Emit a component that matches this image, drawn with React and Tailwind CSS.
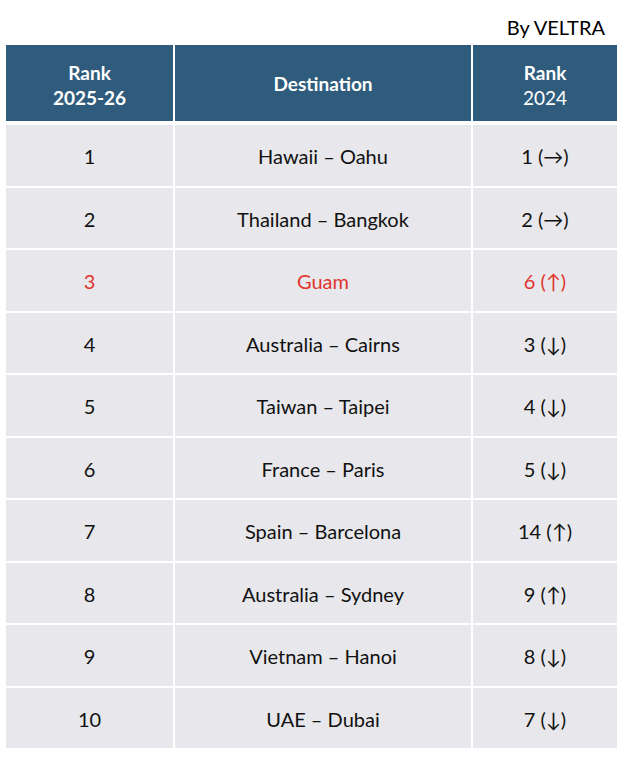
const rows = [
  { rank: '1', dest: 'Hawaii – Oahu', prev: '1', dir: '→' },
  { rank: '2', dest: 'Thailand – Bangkok', prev: '2', dir: '→' },
  { rank: '3', dest: 'Guam', prev: '6', dir: '↑', hot: true },
  { rank: '4', dest: 'Australia – Cairns', prev: '3', dir: '↓' },
  { rank: '5', dest: 'Taiwan – Taipei', prev: '4', dir: '↓' },
  { rank: '6', dest: 'France – Paris', prev: '5', dir: '↓' },
  { rank: '7', dest: 'Spain – Barcelona', prev: '14', dir: '↑' },
  { rank: '8', dest: 'Australia – Sydney', prev: '9', dir: '↑' },
  { rank: '9', dest: 'Vietnam – Hanoi', prev: '8', dir: '↓' },
  { rank: '10', dest: 'UAE – Dubai', prev: '7', dir: '↓' },
];

const font = { fontFamily: 'Lato, "Open Sans", sans-serif' };

export default function App() {
  return (
    <div className="w-[624px] h-[758px] bg-white text-black overflow-hidden" style={font}>
      <div className="flex justify-end pr-[19px] pt-[14px] h-[45px] text-[20px] leading-[26px]">
        By VELTRA
      </div>
      <div className="ml-[6px] w-[611px] grid grid-cols-[167px_296px_144px] gap-x-[2px]">
        <div className="h-[76px] pt-[3px] bg-[#2f5c7d] text-white flex flex-col items-center justify-center text-[19px] leading-[25px] font-bold">
          <span>Rank</span>
          <span>2025-26</span>
        </div>
        <div className="h-[76px] pt-[3px] bg-[#2f5c7d] text-white flex items-center justify-center text-[19px] font-bold">
          Destination
        </div>
        <div className="h-[76px] pt-[3px] bg-[#2f5c7d] text-white flex flex-col items-center justify-center text-[19px] leading-[25px]">
          <span className="font-bold">Rank</span>
          <span>2024</span>
        </div>
      </div>
      <div className="ml-[6px] mt-[4px] w-[611px] grid grid-cols-[167px_296px_144px] auto-rows-[60.5px] gap-x-[2px] gap-y-[2px] text-[20px]">
        {rows.map((r) => {
          const color = r.hot ? 'text-[#e0352c]' : 'text-[#111111]';
          return [
            <div key={r.rank + 'a'} className={`bg-[#e8e8ec] pt-[2px] flex items-center justify-center ${color}`}>
              {r.rank}
            </div>,
            <div key={r.rank + 'b'} className={`bg-[#e8e8ec] pt-[2px] flex items-center justify-center ${color}`}>
              {r.dest}
            </div>,
            <div key={r.rank + 'c'} className={`bg-[#e8e8ec] pt-[2px] flex items-center justify-center ${color}`}>
              {r.prev} ({r.dir})
            </div>,
          ];
        })}
      </div>
    </div>
  );
}
